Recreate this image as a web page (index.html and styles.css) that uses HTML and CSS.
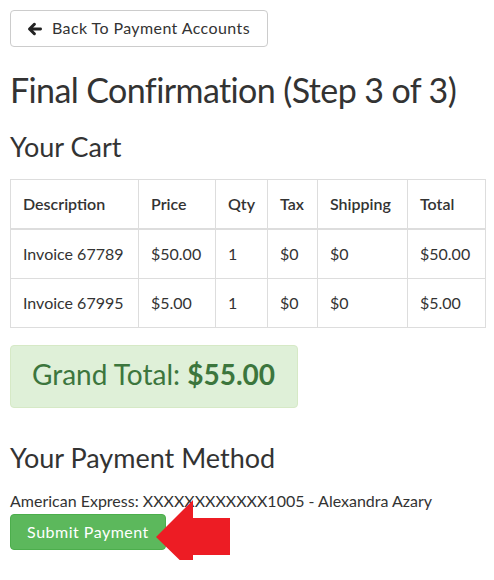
FILE: index.html
```html
<!DOCTYPE html>
<html>
<head>
<meta charset="utf-8">
<link rel="stylesheet" href="styles.css">
</head>
<body>
<div class="page">
  <a class="btn-back" href="#">
    <svg class="icon-left" viewBox="0 0 16 14" width="15" height="14"><path d="M14.5 7H3.2M8 1.8L2.6 7L8 12.2" fill="none" stroke="#222" stroke-width="3" stroke-linecap="round" stroke-linejoin="round"/></svg>
    <span>Back To Payment Accounts</span>
  </a>
  <h1 class="title">Final Confirmation (Step 3 of 3)</h1>
  <h2 class="section">Your Cart</h2>
  <table class="cart">
    <colgroup>
      <col class="c1"><col class="c2"><col class="c3"><col class="c4"><col class="c5"><col class="c6">
    </colgroup>
    <thead>
      <tr><th>Description</th><th>Price</th><th>Qty</th><th>Tax</th><th>Shipping</th><th>Total</th></tr>
    </thead>
    <tbody>
      <tr><td>Invoice 67789</td><td>$50.00</td><td>1</td><td>$0</td><td>$0</td><td>$50.00</td></tr>
      <tr><td>Invoice 67995</td><td>$5.00</td><td>1</td><td>$0</td><td>$0</td><td>$5.00</td></tr>
    </tbody>
  </table>
  <div class="alert-total">Grand Total: <strong>$55.00</strong></div>
  <h3 class="section pay">Your Payment Method</h3>
  <p class="card-line">American Express: XXXXXXXXXXXX1005 - Alexandra Azary</p>
  <div class="submit-wrap">
    <button class="btn-submit">Submit Payment</button>
    <svg class="red-arrow" viewBox="0 0 76 75" width="76" height="75"><polygon points="0,37 37,0 37,18 74,18 74,55 37,55 37,73" fill="#ed1c24"/></svg>
  </div>
</div>
</body>
</html>
```
FILE: styles.css
```css
html, body {
  margin: 0;
  padding: 0;
  background: #fff;
}
body {
  font-family: "Lato", "Open Sans", sans-serif;
  color: #333;
  font-size: 16px;
  line-height: 1.42857;
}
.page {
  padding: 10px;
}
.btn-back {
  display: inline-flex;
  align-items: center;
  gap: 10px;
  box-sizing: border-box;
  width: 258px;
  height: 37px;
  padding: 0 16px;
  border: 1px solid #ccc;
  border-radius: 4px;
  color: #333;
  text-decoration: none;
  font-size: 16px;
  letter-spacing: 0.4px;
}
.icon-left {
  display: block;
  flex: none;
}
.title {
  font-size: 34px;
  font-weight: 400;
  line-height: 1.1;
  letter-spacing: -0.6px;
  white-space: nowrap;
  margin: 24px 0 0;
  color: #333;
}
.section {
  font-size: 27px;
  font-weight: 400;
  line-height: 1.1;
  margin: 24px 0 0;
  color: #333;
}
.cart {
  margin-top: 17px;
  width: 475px;
  table-layout: fixed;
  border-collapse: collapse;
  border: 1px solid #ddd;
}
.c1 { width: 128px; }
.c2 { width: 77px; }
.c3 { width: 52px; }
.c4 { width: 50px; }
.c5 { width: 90px; }
.c6 { width: 78px; }
.cart th, .cart td {
  border: 1px solid #ddd;
  padding: 12px 12px;
  line-height: 24px;
  text-align: left;
  white-space: nowrap;
}
.cart th {
  font-weight: 600;
  border-bottom-width: 2px;
}
.cart td {
  font-weight: 400;
}
.alert-total {
  margin-top: 17px;
  box-sizing: border-box;
  width: 288px;
  height: 63px;
  padding: 0 21px 4px;
  display: flex;
  align-items: center;
  background: #dff0d8;
  border: 1px solid #d6e9c6;
  border-radius: 4px;
  color: #3c763d;
  font-size: 28px;
  white-space: pre;
}
.alert-total strong {
  font-weight: 700;
}
.section.pay {
  margin-top: 35px;
}
.card-line {
  margin: 17px 0 0;
  font-size: 16px;
}
.submit-wrap {
  position: relative;
  margin-top: 1px;
  height: 36px;
}
.btn-submit {
  box-sizing: border-box;
  width: 156px;
  height: 36px;
  padding: 0;
  border: 1px solid #4cae4c;
  border-radius: 4px;
  background: #5cb85c;
  color: #fff;
  font-family: "Lato", "Open Sans", sans-serif;
  font-size: 16px;
  letter-spacing: 0.5px;
}
.red-arrow {
  position: absolute;
  left: 146px;
  top: -14px;
}
```
